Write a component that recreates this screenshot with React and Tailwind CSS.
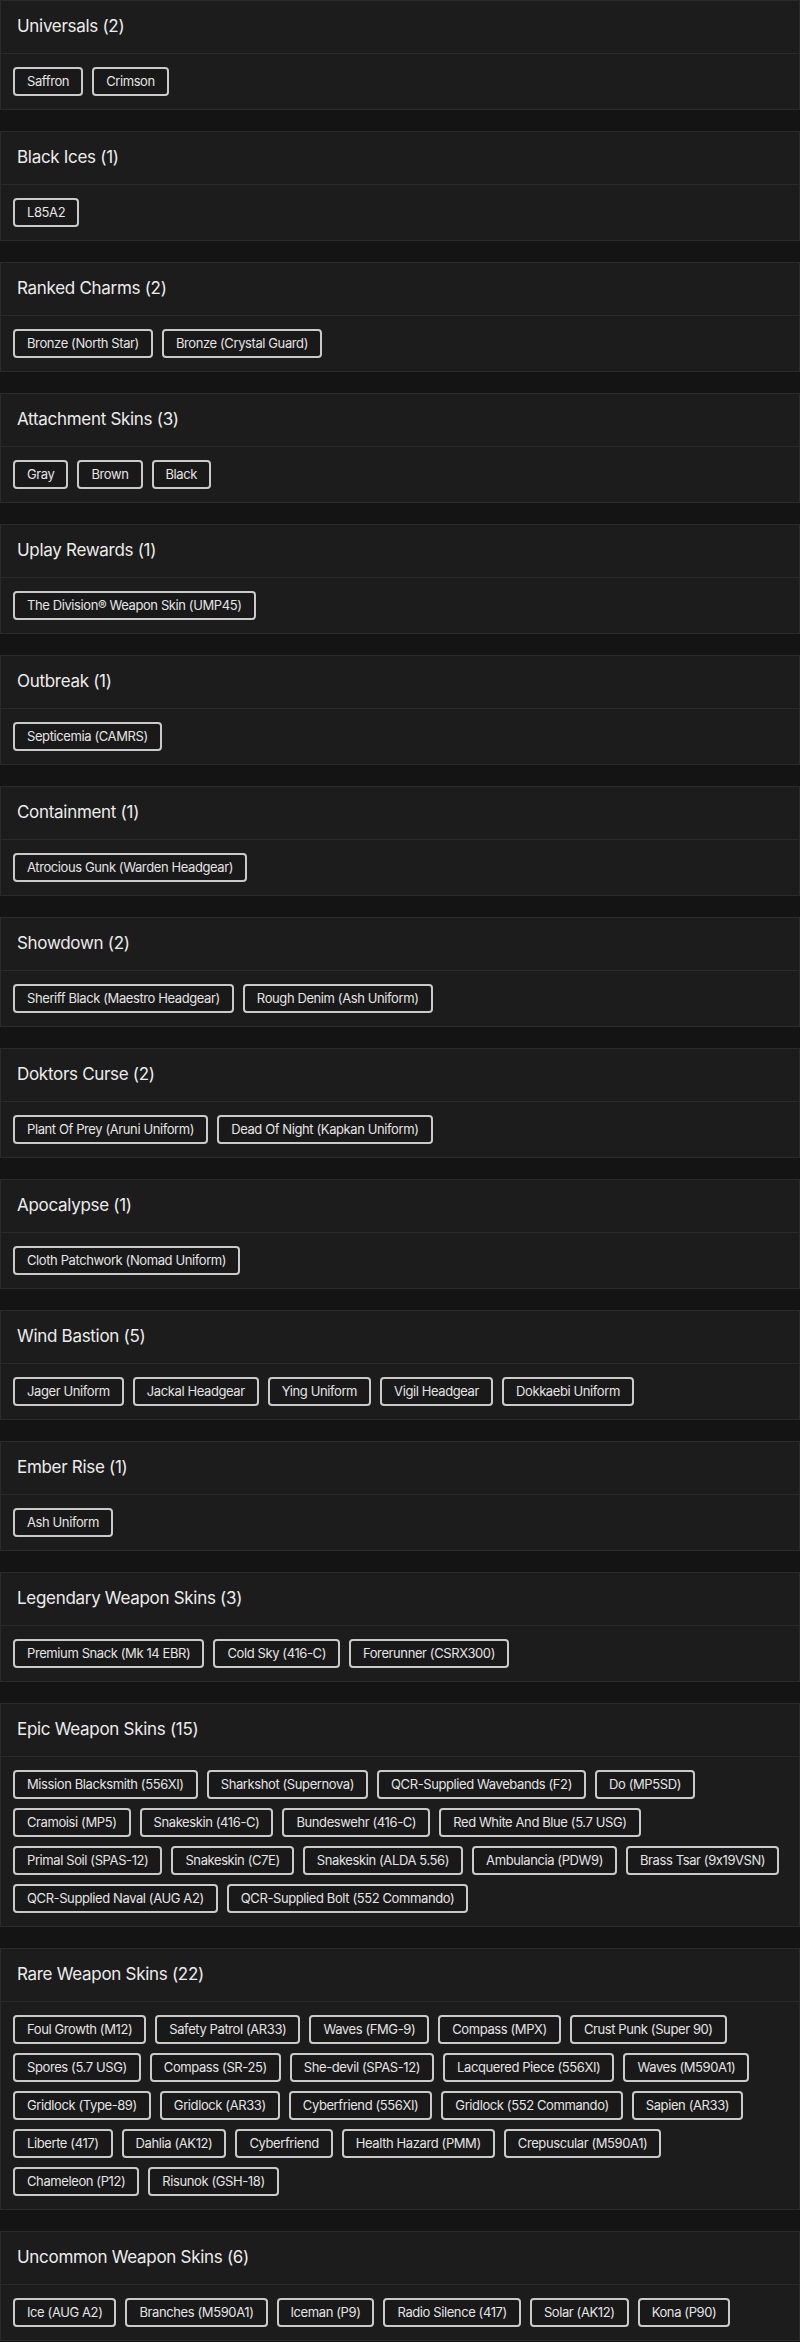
import React from 'react';

// Unlock groups shown as bordered cards with item chips
const groups = [
  { title: 'Universals', items: ['Saffron', 'Crimson'] },
  { title: 'Black Ices', items: ['L85A2'] },
  { title: 'Ranked Charms', items: ['Bronze (North Star)', 'Bronze (Crystal Guard)'] },
  { title: 'Attachment Skins', items: ['Gray', 'Brown', 'Black'] },
  { title: 'Uplay Rewards', items: ['The Division® Weapon Skin (UMP45)'] },
  { title: 'Outbreak', items: ['Septicemia (CAMRS)'] },
  { title: 'Containment', items: ['Atrocious Gunk (Warden Headgear)'] },
  { title: 'Showdown', items: ['Sheriff Black (Maestro Headgear)', 'Rough Denim (Ash Uniform)'] },
  { title: 'Doktors Curse', items: ['Plant Of Prey (Aruni Uniform)', 'Dead Of Night (Kapkan Uniform)'] },
  { title: 'Apocalypse', items: ['Cloth Patchwork (Nomad Uniform)'] },
  {
    title: 'Wind Bastion',
    items: ['Jager Uniform', 'Jackal Headgear', 'Ying Uniform', 'Vigil Headgear', 'Dokkaebi Uniform'],
  },
  { title: 'Ember Rise', items: ['Ash Uniform'] },
  {
    title: 'Legendary Weapon Skins',
    items: ['Premium Snack (Mk 14 EBR)', 'Cold Sky (416-C)', 'Forerunner (CSRX300)'],
  },
  {
    title: 'Epic Weapon Skins',
    items: [
      'Mission Blacksmith (556XI)',
      'Sharkshot (Supernova)',
      'QCR-Supplied Wavebands (F2)',
      'Do (MP5SD)',
      'Cramoisi (MP5)',
      'Snakeskin (416-C)',
      'Bundeswehr (416-C)',
      'Red White And Blue (5.7 USG)',
      'Primal Soil (SPAS-12)',
      'Snakeskin (C7E)',
      'Snakeskin (ALDA 5.56)',
      'Ambulancia (PDW9)',
      'Brass Tsar (9x19VSN)',
      'QCR-Supplied Naval (AUG A2)',
      'QCR-Supplied Bolt (552 Commando)',
    ],
  },
  {
    title: 'Rare Weapon Skins',
    items: [
      'Foul Growth (M12)',
      'Safety Patrol (AR33)',
      'Waves (FMG-9)',
      'Compass (MPX)',
      'Crust Punk (Super 90)',
      'Spores (5.7 USG)',
      'Compass (SR-25)',
      'She-devil (SPAS-12)',
      'Lacquered Piece (556XI)',
      'Waves (M590A1)',
      'Gridlock (Type-89)',
      'Gridlock (AR33)',
      'Cyberfriend (556XI)',
      'Gridlock (552 Commando)',
      'Sapien (AR33)',
      'Liberte (417)',
      'Dahlia (AK12)',
      'Cyberfriend',
      'Health Hazard (PMM)',
      'Crepuscular (M590A1)',
      'Chameleon (P12)',
      'Risunok (GSH-18)',
    ],
  },
  {
    title: 'Uncommon Weapon Skins',
    items: ['Ice (AUG A2)', 'Branches (M590A1)', 'Iceman (P9)', 'Radio Silence (417)', 'Solar (AK12)', 'Kona (P90)'],
  },
];

const Chip = ({ label }) => (
  <span className="h-[29px] flex items-center px-3 rounded-[4px] border-2 border-[#cacaca] bg-[#191919] text-[13px] tracking-[-0.4px] text-[#e4e4e4] whitespace-nowrap">
    {label}
  </span>
);

const GroupCard = ({ title, items }) => (
  <section className="bg-[#1c1c1c] border border-[#2b2b2b]">
    <div className="h-[53px] flex items-center px-4 border-b border-[#2b2b2b]">
      <h2 className="text-[17px] font-normal tracking-[-0.3px] text-[#ececec]">
        {title} ({items.length})
      </h2>
    </div>
    <div className="flex flex-wrap gap-[9px] px-3 pt-[13px] pb-[13px]">
      {items.map((item) => (
        <Chip key={item} label={item} />
      ))}
    </div>
  </section>
);

export default function App() {
  return (
    <div className="min-h-screen bg-[#141414] font-['Inter',sans-serif] [font-feature-settings:'calt'_0] flex flex-col gap-[21px]">
      {groups.map((g) => (
        <GroupCard key={g.title} title={g.title} items={g.items} />
      ))}
    </div>
  );
}
